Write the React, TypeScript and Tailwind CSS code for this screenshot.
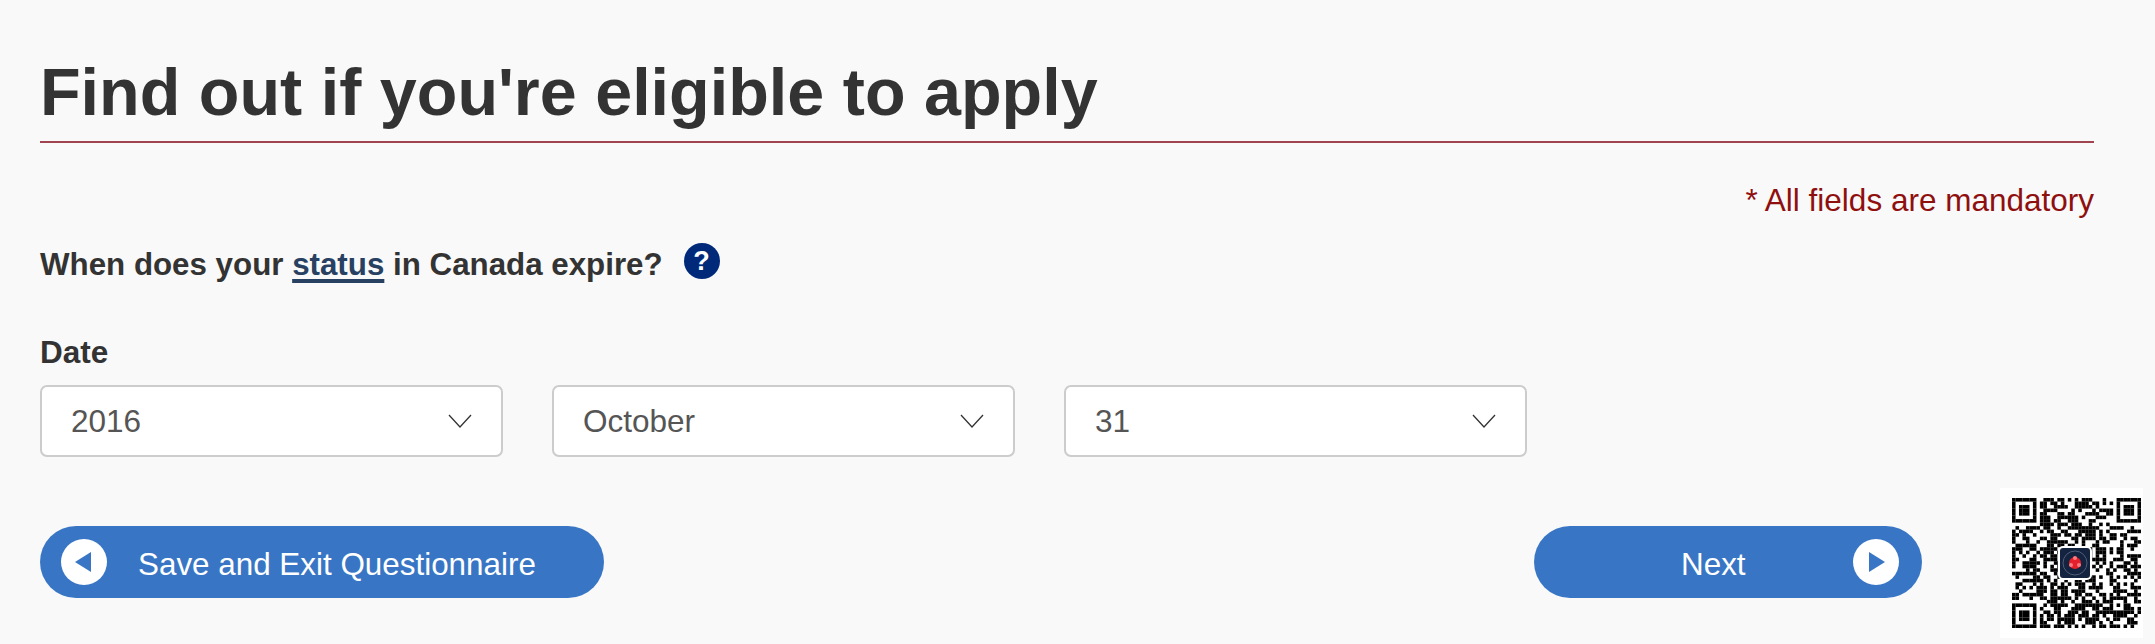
const font = { fontFamily: '"Liberation Sans", Arial, sans-serif' };

const QR_SIZE = 37;

// finder squares and the one alignment square are fixed, the rest is filler
function isDark(x: number, y: number) {
  const finder = (fx: number, fy: number) => {
    const dx = x - fx;
    const dy = y - fy;
    if (dx < -1 || dy < -1 || dx > 7 || dy > 7) return null;
    if (dx < 0 || dy < 0 || dx > 6 || dy > 6) return false;
    if (dx === 0 || dy === 0 || dx === 6 || dy === 6) return true;
    return dx >= 2 && dx <= 4 && dy >= 2 && dy <= 4;
  };
  for (const [fx, fy] of [[0, 0], [30, 0], [0, 30]]) {
    const r = finder(fx, fy);
    if (r !== null) return r;
  }
  const ax = Math.abs(x - 30);
  const ay = Math.abs(y - 30);
  if (ax <= 2 && ay <= 2) return Math.max(ax, ay) !== 1;
  const h = Math.sin(x * 12.9898 + y * 78.233 + (x >> 1) * (y >> 1) * 0.37) * 43758.5453;
  return h - Math.floor(h) > 0.47;
}

function QrCode() {
  const cells = [];
  for (let y = 0; y < QR_SIZE; y++) {
    for (let x = 0; x < QR_SIZE; x++) {
      if (isDark(x, y)) cells.push(<rect key={x + "-" + y} x={x} y={y} width="1.02" height="1.02" fill="#000" />);
    }
  }
  return (
    <div className="w-[143px] h-[150px] bg-white pl-[12px] pt-[10px] shrink-0">
      <svg width="129" height="130" viewBox="0 0 129 130">
        <svg width="129" height="130" viewBox="0 0 37 37" preserveAspectRatio="none">{cells}</svg>
        <rect x="47" y="49" width="32" height="32" rx="4" fill="#14233f" stroke="#fff" strokeWidth="2" />
        <circle cx="63" cy="65" r="12" fill="none" stroke="#4f5d78" strokeWidth="1" />
        <circle cx="63" cy="65" r="6" fill="#e3202c" />
        <circle cx="63" cy="60" r="2" fill="#ff7a80" />
        <circle cx="59" cy="67" r="2" fill="#ff7a80" />
        <circle cx="67" cy="67" r="2" fill="#ff7a80" />
      </svg>
    </div>
  );
}

function DateSelect({ value }: { value: string }) {
  return (
    <div className="w-[463px] h-[72px] bg-white border-2 border-[#cccccc] rounded-[7px] flex items-center justify-between pl-[29px] pr-[29px] text-[#555555] text-[31.5px]">
      <span className="pt-[2px]">{value}</span>
      <svg width="24" height="14" viewBox="0 0 24 14" fill="none" stroke="#333" strokeWidth="1.3">
        <path d="M1 1l11 12L23 1" />
      </svg>
    </div>
  );
}

function ArrowCircle({ direction }: { direction: "left" | "right" }) {
  return (
    <span className="w-[46px] h-[46px] rounded-full bg-white flex items-center justify-center shrink-0 blur-[0.6px]">
      <svg width="18" height="20" viewBox="0 0 18 20" fill="#3876c5">
        {direction === "left" ? <path d="M16 0v20L0 10z" /> : <path d="M2 0v20l16-10z" />}
      </svg>
    </span>
  );
}

export default function App() {
  return (
    <div style={font} className="w-[2155px] h-[644px] bg-[#f9f9f9] overflow-hidden relative text-[#333333]">
      <div className="pl-10 pr-[61px] pt-[53px]">
        <h1 className="text-[66.5px] leading-[78px] font-bold border-b-2 border-[#a0454f] pb-[10px]">
          Find out if you're eligible to apply
        </h1>
        <p className="text-right text-[31.5px] leading-[36px] text-[#8f0f0f] mt-[39px]">* All fields are mandatory</p>
        <div className="flex items-start mt-[14px] text-[31.3px] leading-[36px] font-bold">
          <span className="mt-[15px]">
            When does your <a className="text-[#284162] underline decoration-[4px] underline-offset-[4px]">status</a> in Canada expire?
          </span>
          <span className="ml-[21px] mt-[11px] w-9 h-9 rounded-full bg-[#00297a] text-white text-[27px] flex items-center justify-center">?</span>
        </div>
        <div className="text-[31.5px] leading-[36px] font-bold mt-[51px]">Date</div>
        <div className="flex gap-[49px] mt-[15px]">
          <DateSelect value="2016" />
          <DateSelect value="October" />
          <DateSelect value="31" />
        </div>
        <div className="flex justify-between mt-[69px] text-white text-[31.4px] pr-[172px]">
          <button className="w-[564px] h-[72px] rounded-[36px] bg-[#3876c5] flex items-center pl-[21px]">
            <ArrowCircle direction="left" />
            <span className="ml-[31px] pt-[5px]">Save and Exit Questionnaire</span>
          </button>
          <button className="w-[388px] h-[72px] rounded-[36px] bg-[#3876c5] flex items-center justify-between pr-[23px]">
            <span className="ml-[147px] pt-[5px]">Next</span>
            <ArrowCircle direction="right" />
          </button>
        </div>
      </div>
      <div className="absolute left-[2000px] top-[488px]">
        <QrCode />
      </div>
    </div>
  );
}
